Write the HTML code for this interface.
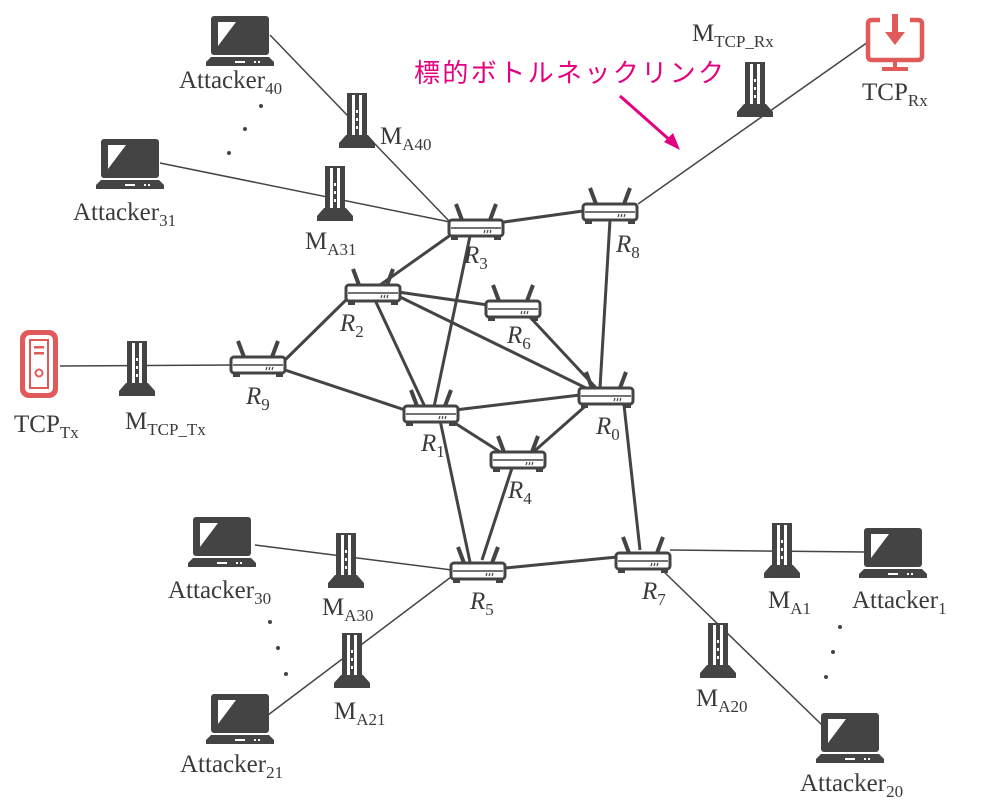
<!DOCTYPE html>
<html><head><meta charset="utf-8"><style>
html,body{margin:0;padding:0;background:#fff;}
svg{display:block;}
.t{font-family:"Liberation Serif",serif;fill:#3a3a3a;font-size:25px;}
.r{font-family:"Liberation Serif",serif;fill:#3a3a3a;font-size:25px;font-style:italic;}
.s{font-size:17px;}
</style></head><body>
<svg width="993" height="802" viewBox="0 0 993 802" xmlns="http://www.w3.org/2000/svg">
<defs>
<g id="rt">
<line x1="-14" y1="-8" x2="-20" y2="-24" stroke="#444" stroke-width="4"/>
<line x1="14" y1="-8" x2="20" y2="-24" stroke="#444" stroke-width="4"/>
<rect x="-27" y="-8" width="54" height="16" rx="3" fill="#fff" stroke="#444" stroke-width="3"/>
<line x1="-25" y1="0" x2="25" y2="0" stroke="#444" stroke-width="1.5"/>
<path d="M8 5 l1-3 M11 5 l1-3 M14 5 l1-3" stroke="#444" stroke-width="1.2"/>
<rect x="-25" y="9" width="7" height="3" fill="#444"/><rect x="18" y="9" width="7" height="3" fill="#444"/>
</g>
<g id="tw">
<path d="M-18 0 L18 0 L18 -5 L11 -13 L-11 -13 L-18 -5 Z" fill="#444"/>
<rect x="-10" y="-55" width="20" height="44" fill="#444"/>
<rect x="-5" y="-53" width="10" height="40" fill="#fff"/>
<rect x="-2" y="-53" width="4" height="40" fill="#444"/>
<rect x="-1" y="-38" width="2" height="3" fill="#fff"/><rect x="-1" y="-30" width="2" height="3" fill="#fff"/><rect x="-1" y="-22" width="2" height="3" fill="#fff"/>
</g>
<g id="lp">
<rect x="-29" y="0" width="58" height="39" rx="3" fill="#444"/>
<path d="M-22 6 L-4 6 L-22 30 Z" fill="#fff"/>
<path d="M-29 41 L29 41 L34 46 L34 50 L-34 50 L-34 46 Z" fill="#444"/>
<rect x="-5" y="45" width="10" height="2" fill="#fff"/><rect x="14" y="45" width="2" height="2" fill="#fff"/><rect x="18" y="45" width="2" height="2" fill="#fff"/>
</g>
</defs>

<g stroke="#444" stroke-width="1.5" fill="none">
<line x1="270" y1="35" x2="450" y2="222"/>
<line x1="160" y1="163" x2="450" y2="222"/>
<line x1="638" y1="204" x2="868" y2="42"/>
<line x1="60" y1="366" x2="232" y2="365"/>
<line x1="255" y1="545" x2="452" y2="570"/>
<line x1="268" y1="715" x2="455" y2="574"/>
<line x1="670" y1="550" x2="866" y2="552"/>
<line x1="660" y1="568" x2="822" y2="725"/>
</g>
<g stroke="#444" stroke-width="3" fill="none">
<line x1="504" y1="222" x2="583" y2="211"/>
<line x1="610" y1="220" x2="600" y2="388"/>
<line x1="452" y1="234" x2="373" y2="290"/>
<line x1="470" y1="236" x2="434" y2="407"/>
<line x1="348" y1="298" x2="285" y2="360"/>
<line x1="375" y1="300" x2="425" y2="407"/>
<line x1="398" y1="292" x2="488" y2="305"/>
<line x1="398" y1="296" x2="590" y2="390"/>
<line x1="528" y1="315" x2="598" y2="390"/>
<line x1="285" y1="370" x2="405" y2="410"/>
<line x1="455" y1="410" x2="580" y2="395"/>
<line x1="450" y1="420" x2="505" y2="455"/>
<line x1="530" y1="455" x2="590" y2="402"/>
<line x1="440" y1="420" x2="470" y2="562"/>
<line x1="512" y1="468" x2="482" y2="560"/>
<line x1="505" y1="568" x2="617" y2="557"/>
<line x1="624" y1="405" x2="640" y2="550"/>
</g>

<use href="#rt" x="476" y="228"/>
<use href="#rt" x="610" y="212"/>
<use href="#rt" x="373" y="293"/>
<use href="#rt" x="513" y="309"/>
<use href="#rt" x="258" y="365"/>
<use href="#rt" x="431" y="414"/>
<use href="#rt" x="606" y="396"/>
<use href="#rt" x="518" y="460"/>
<use href="#rt" x="478" y="571"/>
<use href="#rt" x="643" y="561"/>

<use href="#tw" x="137" y="396"/>
<use href="#tw" x="755" y="117"/>
<use href="#tw" x="357" y="148"/>
<use href="#tw" x="335" y="221"/>
<use href="#tw" x="346" y="588"/>
<use href="#tw" x="352" y="688"/>
<use href="#tw" x="782" y="578"/>
<use href="#tw" x="718" y="678"/>

<use href="#lp" x="240" y="16"/>
<use href="#lp" x="130" y="139"/>
<use href="#lp" x="222" y="517"/>
<use href="#lp" x="240" y="694"/>
<use href="#lp" x="893" y="528"/>
<use href="#lp" x="850" y="713"/>

<rect x="20" y="330" width="38" height="68" rx="9" fill="#e05a5a"/>
<rect x="25" y="335" width="28" height="58" rx="5" fill="#fff"/>
<rect x="29" y="339" width="20" height="50" fill="#e05a5a"/>
<rect x="31" y="341" width="16" height="46" fill="#fff"/>
<rect x="34" y="346" width="10" height="2.5" fill="#e05a5a"/><rect x="34" y="352" width="10" height="2.5" fill="#e05a5a"/>
<circle cx="39" cy="373" r="3.5" fill="none" stroke="#e05a5a" stroke-width="2"/>
<path d="M880 20 L872 20 Q868 20 868 24 L868 56 Q868 60 872 60 L918 60 Q922 60 922 56 L922 24 Q922 20 918 20 L910 20" fill="none" stroke="#e05a5a" stroke-width="4.5"/>
<rect x="893" y="60" width="4" height="8" fill="#e05a5a"/><rect x="882" y="67" width="26" height="4" fill="#e05a5a"/>
<rect x="892" y="14" width="6" height="20" fill="#e05a5a"/>
<path d="M885 32 L905 32 L895 45 Z" fill="#e05a5a"/>

<g fill="#444">
<circle cx="261" cy="106" r="2"/><circle cx="245" cy="129" r="2"/><circle cx="229" cy="153" r="2"/>
<circle cx="270" cy="622" r="2"/><circle cx="278" cy="648" r="2"/><circle cx="286" cy="674" r="2"/>
<circle cx="840" cy="627" r="2"/><circle cx="833" cy="652" r="2"/><circle cx="826" cy="677" r="2"/>
</g>

<text x="414" y="82" style="font-family:'Noto Sans CJK JP',sans-serif;font-size:26px;fill:#e4007f" textLength="310">標的ボトルネックリンク</text>
<line x1="620" y1="96" x2="672" y2="142" stroke="#e4007f" stroke-width="3"/>
<path d="M680 150 L664 142 L673 133 Z" fill="#e4007f"/>

<text class="t" x="179" y="88">Attacker<tspan class="s" dy="6">40</tspan></text>
<text class="t" x="73" y="220">Attacker<tspan class="s" dy="6">31</tspan></text>
<text class="t" x="168" y="598">Attacker<tspan class="s" dy="6">30</tspan></text>
<text class="t" x="180" y="772">Attacker<tspan class="s" dy="6">21</tspan></text>
<text class="t" x="852" y="608">Attacker<tspan class="s" dy="6">1</tspan></text>
<text class="t" x="800" y="791">Attacker<tspan class="s" dy="6">20</tspan></text>
<text class="t" x="380" y="144">M<tspan class="s" dy="6">A40</tspan></text>
<text class="t" x="305" y="249">M<tspan class="s" dy="6">A31</tspan></text>
<text class="t" x="322" y="615">M<tspan class="s" dy="6">A30</tspan></text>
<text class="t" x="334" y="719">M<tspan class="s" dy="6">A21</tspan></text>
<text class="t" x="768" y="608">M<tspan class="s" dy="6">A1</tspan></text>
<text class="t" x="696" y="706">M<tspan class="s" dy="6">A20</tspan></text>
<text class="t" x="692" y="41">M<tspan class="s" dy="6">TCP_Rx</tspan></text>
<text class="t" x="125" y="429">M<tspan class="s" dy="6">TCP_Tx</tspan></text>
<text class="t" x="14" y="432">TCP<tspan class="s" dy="6">Tx</tspan></text>
<text class="t" x="862" y="100">TCP<tspan class="s" dy="6">Rx</tspan></text>
<text class="r" x="464" y="263">R<tspan class="s" dy="6" style="font-style:normal">3</tspan></text>
<text class="r" x="616" y="252">R<tspan class="s" dy="6" style="font-style:normal">8</tspan></text>
<text class="r" x="340" y="331">R<tspan class="s" dy="6" style="font-style:normal">2</tspan></text>
<text class="r" x="507" y="343">R<tspan class="s" dy="6" style="font-style:normal">6</tspan></text>
<text class="r" x="246" y="404">R<tspan class="s" dy="6" style="font-style:normal">9</tspan></text>
<text class="r" x="421" y="451">R<tspan class="s" dy="6" style="font-style:normal">1</tspan></text>
<text class="r" x="596" y="434">R<tspan class="s" dy="6" style="font-style:normal">0</tspan></text>
<text class="r" x="508" y="498">R<tspan class="s" dy="6" style="font-style:normal">4</tspan></text>
<text class="r" x="470" y="609">R<tspan class="s" dy="6" style="font-style:normal">5</tspan></text>
<text class="r" x="642" y="599">R<tspan class="s" dy="6" style="font-style:normal">7</tspan></text>
</svg>
</body></html>
